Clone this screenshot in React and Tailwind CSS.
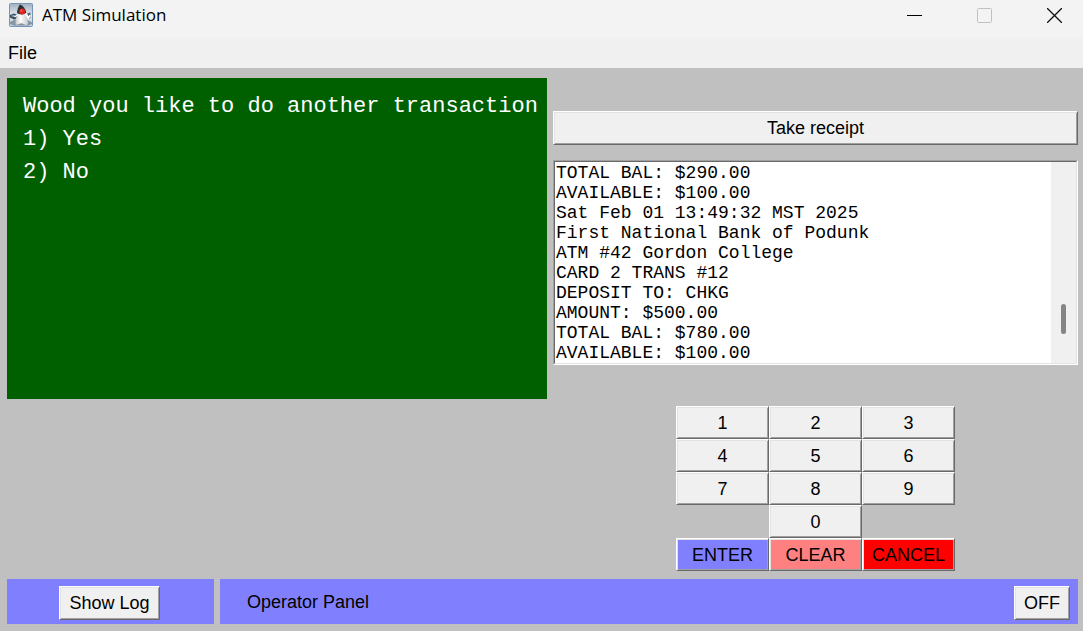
import React from "react";

const BEVEL =
  "border border-t-white border-l-white border-r-[#696969] border-b-[#696969] shadow-[inset_1px_1px_0_#e3e3e3,inset_-1px_-1px_0_#a0a0a0] text-lg leading-none text-black whitespace-nowrap";

const RECEIPT = [
  "TOTAL BAL: $290.00",
  "AVAILABLE: $100.00",
  "Sat Feb 01 13:49:32 MST 2025",
  "First National Bank of Podunk",
  "ATM #42 Gordon College",
  "CARD 2 TRANS #12",
  "DEPOSIT TO: CHKG",
  "AMOUNT: $500.00",
  "TOTAL BAL: $780.00",
  "AVAILABLE: $100.00",
].join("\n");

const KEYS = [
  { label: "1" },
  { label: "2" },
  { label: "3" },
  { label: "4" },
  { label: "5" },
  { label: "6" },
  { label: "7" },
  { label: "8" },
  { label: "9" },
  { label: "0", tone: "bg-[#f0f0f0] col-start-2" },
  { label: "ENTER", tone: "bg-[#8080ff] col-start-1" },
  { label: "CLEAR", tone: "bg-[#ff8080]" },
  { label: "CANCEL", tone: "bg-[#ff0000]" },
];

function Button({ className = "", children }) {
  return (
    <button type="button" className={`${BEVEL} ${className}`}>
      {children}
    </button>
  );
}

function DukeIcon() {
  return (
    <svg width="24" height="24" viewBox="0 0 24 24" aria-hidden="true">
      <defs>
        <linearGradient id="tile" x1="0" y1="0" x2="0" y2="1">
          <stop offset="0" stopColor="#9fb0c2" />
          <stop offset="0.5" stopColor="#dfe7ef" />
          <stop offset="1" stopColor="#b9cbdd" />
        </linearGradient>
        <linearGradient id="body" x1="0" y1="0" x2="1" y2="0">
          <stop offset="0" stopColor="#c4c4c4" />
          <stop offset="0.4" stopColor="#ffffff" />
          <stop offset="1" stopColor="#c9c9c9" />
        </linearGradient>
      </defs>
      <rect x="0.5" y="0.5" width="23" height="23" rx="1" fill="url(#tile)" stroke="#7795b3" />
      <path d="M1 19 6 16.5h12l5 3V21l-4 1.5H5L1 21z" fill="#8795a3" />
      <path d="M1 12 5 10.5 8.5 12v3L5 16.5 1 14.5z" fill="#3a4956" />
      <path d="M2 12.8 5 11.8 7 13l-3 1.2z" fill="#7aa5c8" />
      <path d="M18 10.5 21.5 9.5V15L18.5 16z" fill="#53626f" />
      <path d="M9 9.5C7.5 13 6.3 17 6.5 20.5c.1 1.5 1.7 1.7 3.2.5 1.6-1.2 3.3-1.1 5 0 1.8 1.2 4.3 1.5 4.3-.8C19 16 18 12.500 16.800 9z" fill="url(#body)" />
      <path d="M17 10.500 19.300 15l2-2.800" stroke="#ffffff" strokeWidth="1.700" fill="none" />
      <path d="M8.500 12 5.500 14" stroke="#ffffff" strokeWidth="1.400" />
      <path d="M10.800 1.500C14 2.500 16.500 5.500 17.300 9.500 15 12 10.500 12 8 10 8.200 7 9.200 4 10.800 1.500z" fill="#2b2d30" />
      <circle cx="13.200" cy="8.500" r="3" fill="#dd2420" />
      <circle cx="12.400" cy="7.700" r="1" fill="#ff6757" />
    </svg>
  );
}

export default function App() {
  return (
    <div className="flex min-h-screen flex-col bg-[#c0c0c0] font-['Liberation_Sans',Arial,sans-serif] text-lg text-black">
      <header className="flex h-[38px] items-start justify-between bg-[#f3f3f3]">
        <div className="flex h-[30px] items-center gap-[9px] pl-[9px]">
          <DukeIcon />
          <h1 className="font-['Open_Sans','Noto_Sans',sans-serif] text-[17px] leading-6">ATM Simulation</h1>
        </div>
        <div className="flex h-[30px] items-center">
          <button type="button" aria-label="Minimize" className="flex h-[30px] w-[70px] items-center justify-center">
            <svg width="15" height="15" viewBox="0 0 15 15" fill="none" stroke="#000">
              <path d="M0 7.5h15" />
            </svg>
          </button>
          <button type="button" aria-label="Maximize" disabled className="flex h-[30px] w-[70px] items-center justify-center">
            <svg width="15" height="15" viewBox="0 0 15 15" fill="none" stroke="#c0c0c0">
              <rect x="0.5" y="0.5" width="14" height="14" rx="1" />
            </svg>
          </button>
          <button type="button" aria-label="Close" className="mr-[-6px] flex h-[30px] w-[70px] items-center justify-center">
            <svg width="15" height="15" viewBox="0 0 15 15" fill="none" stroke="#111" strokeWidth="1.3">
              <path d="M0 0l15 15M15 0L0 15" />
            </svg>
          </button>
        </div>
      </header>

      <nav className="flex h-[30px] items-center bg-[#f0f0f0] px-2">
        <button type="button" className="leading-6">File</button>
      </nav>

      <main className="flex grow flex-col gap-2 pt-[10px] pr-[5px] pb-[7px] pl-[7px]">
        <div className="grid grow grid-cols-[540fr_525fr] gap-x-1.5">
          <section
            aria-label="Display"
            className="h-[321px] overflow-hidden bg-[#006000] px-4 pt-3 font-['Liberation_Mono','Courier_New',monospace] text-[22px] leading-[33px] whitespace-pre text-white"
          >
            <p>Wood you like to do another transaction</p>
            <p>1) Yes</p>
            <p>2) No</p>
          </section>

          <section className="flex flex-col pt-[33px]">
            <Button className="h-[34px] bg-[#f0f0f0]">Take receipt</Button>

            <div className="mt-[15px] h-[205px] border border-t-[#a0a0a0] border-r-white border-b-white border-l-[#a0a0a0]">
              <div className="flex h-full border border-t-[#696969] border-r-[#e3e3e3] border-b-[#e3e3e3] border-l-[#696969] bg-white">
                <textarea
                  readOnly
                  aria-label="Receipt"
                  value={RECEIPT}
                  className="min-w-0 grow resize-none overflow-hidden bg-white pt-px pl-px font-['Liberation_Mono','Courier_New',monospace] text-lg leading-5 text-black outline-none"
                />
                <div className="flex w-[25px] flex-col items-center justify-end bg-[#f0f0f0] pb-[29px]">
                  <div className="h-[30px] w-[5px] rounded-full bg-[#858585]" />
                </div>
              </div>
            </div>

            <div className="mt-[41px] grid auto-rows-[33px] grid-cols-[repeat(3,93px)] justify-center">
              {KEYS.map(({ label, tone = "bg-[#f0f0f0]" }) => (
                <Button key={label} className={tone}>
                  {label}
                </Button>
              ))}
            </div>
          </section>
        </div>

        <footer className="grid grid-cols-[207fr_858fr] gap-x-1.5">
          <div className="flex h-[45px] items-start justify-center bg-[#8080ff] pt-[7px] pr-0.5">
            <Button className="h-[34px] bg-[#f0f0f0] px-[9px]">Show Log</Button>
          </div>
          <div className="flex h-[45px] items-start justify-between bg-[#8080ff] pt-[7px] pr-2 pl-[27px]">
            <span className="leading-8">Operator Panel</span>
            <Button className="h-[34px] bg-[#f0f0f0] px-[9px]">OFF</Button>
          </div>
        </footer>
      </main>
    </div>
  );
}
